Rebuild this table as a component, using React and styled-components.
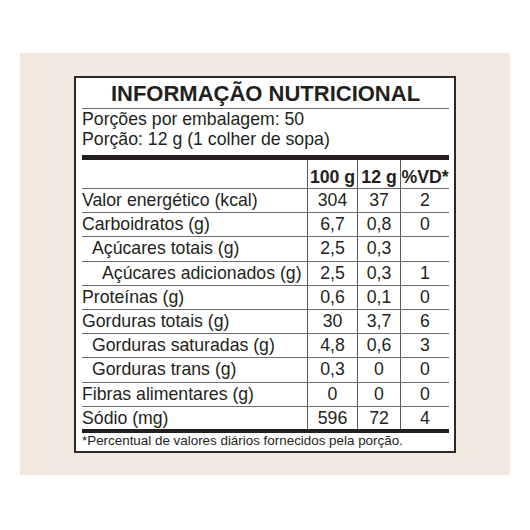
import styled, { createGlobalStyle } from "styled-components"

const GlobalStyle = createGlobalStyle`
  html, body {
    margin: 0;
    padding: 0;
    background: #ffffff;
  }
  body {
    font-family: "Liberation Sans", Arial, sans-serif;
    color: #231f20;
  }
`

const Page = styled.div`
  width: 530px;
  height: 530px;
  padding-top: 53px;
  padding-left: 20px;
  box-sizing: border-box;
`

const Backdrop = styled.div`
  width: 490px;
  height: 422px;
  background: #f1e9df;
  padding: 23px 0 0 54px;
  box-sizing: border-box;
`

const Label = styled.section`
  width: 382px;
  height: 377px;
  box-sizing: border-box;
  background: #ffffff;
  border: 2px solid #2b2a29;
  padding: 0 5px 0 6px;
`

const Title = styled.h1`
  margin: 0;
  padding-top: 2px;
  font-size: 22px;
  line-height: 28px;
  font-weight: 700;
  text-align: center;
  letter-spacing: 0;
  border-bottom: 1px solid #6d6d6d;
`

const Serving = styled.div`
  font-size: 17.7px;
  line-height: 20px;
  padding-bottom: 6px;
  border-bottom: 5px solid #231f20;
`

const Row = styled.div`
  display: grid;
  grid-template-columns: 225px 50px 43px 49px;
  border-bottom: ${(p) => (p.last ? "4px solid #231f20" : "1px solid #6d6d6d")};
  font-size: 17.7px;
  line-height: ${(p) => (p.head ? "21px" : p.last ? "22.2px" : "23.2px")};
  font-weight: ${(p) => (p.head ? 700 : 400)};
`

const Name = styled.div`
  padding-left: ${(p) => p.indent * 10}px;
  white-space: nowrap;
  padding-top: ${(p) => (p.head ? "7px" : "0")};
`

const Value = styled.div`
  border-left: 1.5px solid #5a5a5a;
  text-align: center;
  white-space: nowrap;
  padding-top: ${(p) => (p.head ? "7px" : "0")};
`

const Footnote = styled.p`
  margin: 0;
  font-size: 13.4px;
  line-height: 16px;
  white-space: nowrap;
`

const rows = [
  ["Valor energético (kcal)", 0, "304", "37", "2"],
  ["Carboidratos (g)", 0, "6,7", "0,8", "0"],
  ["Açúcares totais (g)", 1, "2,5", "0,3", ""],
  ["Açúcares adicionados (g)", 2, "2,5", "0,3", "1"],
  ["Proteínas (g)", 0, "0,6", "0,1", "0"],
  ["Gorduras totais (g)", 0, "30", "3,7", "6"],
  ["Gorduras saturadas (g)", 1, "4,8", "0,6", "3"],
  ["Gorduras trans (g)", 1, "0,3", "0", "0"],
  ["Fibras alimentares (g)", 0, "0", "0", "0"],
  ["Sódio (mg)", 0, "596", "72", "4"],
]

export default function App() {
  return (
    <>
      <GlobalStyle />
      <Page>
        <Backdrop>
          <Label>
            <Title>INFORMAÇÃO NUTRICIONAL</Title>
            <Serving>
              <div>Porções por embalagem: 50</div>
              <div>Porção: 12 g (1 colher de sopa)</div>
            </Serving>
            <Row head>
              <Name head indent={0}></Name>
              <Value head>100 g</Value>
              <Value head>12 g</Value>
              <Value head>%VD*</Value>
            </Row>
            {rows.map(([name, indent, a, b, vd], i) => (
              <Row key={name} last={i === rows.length - 1}>
                <Name indent={indent}>{name}</Name>
                <Value>{a}</Value>
                <Value>{b}</Value>
                <Value>{vd}</Value>
              </Row>
            ))}
            <Footnote>*Percentual de valores diários fornecidos pela porção.</Footnote>
          </Label>
        </Backdrop>
      </Page>
    </>
  )
}
